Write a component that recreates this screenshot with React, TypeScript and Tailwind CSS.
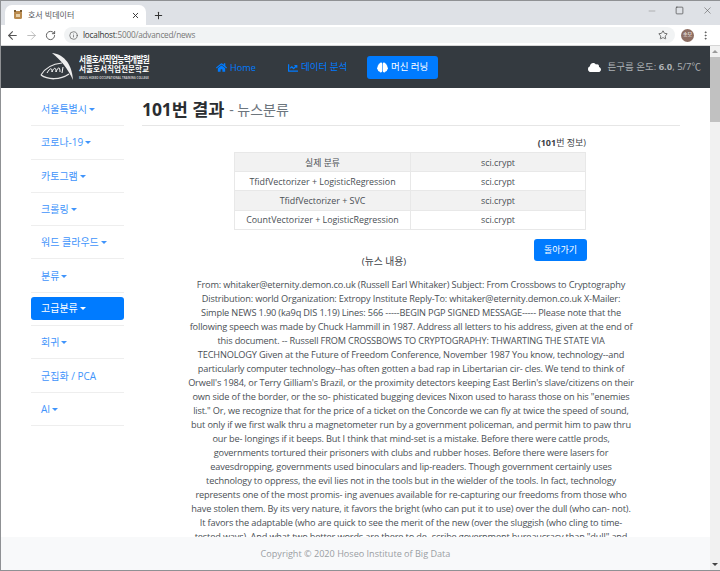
import React from "react";
import { FaHome, FaChartLine, FaBrain, FaCloud } from "react-icons/fa";
import { ArrowLeft, ArrowRight, RotateCw, Info, Star, X, Plus, Minus, Square, MoreVertical } from "lucide-react";

const sideItems = [
  { label: "서울특별시", caret: true },
  { label: "코로나-19", caret: true },
  { label: "카토그램", caret: true },
  { label: "크롤링", caret: true },
  { label: "워드 클라우드", caret: true },
  { label: "분류", caret: true },
  { label: "고급분류", caret: true, active: true },
  { label: "회귀", caret: true },
  { label: "군집화 / PCA", caret: false },
  { label: "AI", caret: true },
];

const rows = [
  ["실제 분류", "sci.crypt"],
  ["TfidfVectorizer + LogisticRegression", "sci.crypt"],
  ["TfidfVectorizer + SVC", "sci.crypt"],
  ["CountVectorizer + LogisticRegression", "sci.crypt"],
];

const lines = [
  "From: whitaker@eternity.demon.co.uk (Russell Earl Whitaker) Subject: From Crossbows to Cryptography",
  "Distribution: world Organization: Extropy Institute Reply-To: whitaker@eternity.demon.co.uk X-Mailer:",
  "Simple NEWS 1.90 (ka9q DIS 1.19) Lines: 566 -----BEGIN PGP SIGNED MESSAGE----- Please note that the",
  "following speech was made by Chuck Hammill in 1987. Address all letters to his address, given at the end of",
  "this document. -- Russell FROM CROSSBOWS TO CRYPTOGRAPHY: THWARTING THE STATE VIA",
  "TECHNOLOGY Given at the Future of Freedom Conference, November 1987 You know, technology--and",
  "particularly computer technology--has often gotten a bad rap in Libertarian cir- cles. We tend to think of",
  "Orwell's 1984, or Terry Gilliam's Brazil, or the proximity detectors keeping East Berlin's slave/citizens on their",
  "own side of the border, or the so- phisticated bugging devices Nixon used to harass those on his \"enemies",
  "list.\" Or, we recognize that for the price of a ticket on the Concorde we can fly at twice the speed of sound,",
  "but only if we first walk thru a magnetometer run by a government policeman, and permit him to paw thru",
  "our be- longings if it beeps. But I think that mind-set is a mistake. Before there were cattle prods,",
  "governments tortured their prisoners with clubs and rubber hoses. Before there were lasers for",
  "eavesdropping, governments used binoculars and lip-readers. Though government certainly uses",
  "technology to oppress, the evil lies not in the tools but in the wielder of the tools. In fact, technology",
  "represents one of the most promis- ing avenues available for re-capturing our freedoms from those who",
  "have stolen them. By its very nature, it favors the bright (who can put it to use) over the dull (who can- not).",
  "It favors the adaptable (who are quick to see the merit of the new (over the sluggish (who cling to time-",
  "tested ways). And what two better words are there to de- scribe government bureaucracy than \"dull\" and",
];

function Caret() {
  return <span className="inline-block ml-[2px] align-[2px] w-0 h-0 border-x-[3.5px] border-x-transparent border-t-[3.5px] border-t-current" />;
}

function Logo() {
  return (
    <div className="flex items-center gap-[4px] ml-[39px] w-[150px] shrink-0">
      <svg width="35" height="28" viewBox="0 0 35 28" fill="none" className="shrink-0">
        <path d="M1 22 C5 15 12 11 22 10" stroke="#e8e8e8" strokeWidth="1.2" />
        <path d="M12 0 C22 1 32 9 33 27 C28 16 21 7 12 0 Z" fill="#eeeeee" />
        <path d="M1 22 C8 27 20 27 29 21" stroke="#e8e8e8" strokeWidth="1.5" />
        <path d="M7 20 C10 15 12 14 12 19 C14 14 16 14 16 19 C18 14 20 13 20 19 M23 14 L22 20" stroke="#ffffff" strokeWidth="1" />
      </svg>
      <div className="flex flex-col text-white font-bold whitespace-nowrap">
        <span className="text-[7.6px] leading-[11px] tracking-[-0.6px] scale-y-[1.25]">서울호서직업능력개발원</span>
        <span className="text-[7.6px] leading-[9px] tracking-[0.02px]">서울호서직업전문학교</span>
        <span className="text-[2.8px] leading-[6px] text-[#cfcfcf] mt-[1px]">SEOUL HOSEO OCCUPATIONAL TRAINING COLLEGE</span>
      </div>
    </div>
  );
}

export default function App() {
  return (
    <div className="relative w-[720px] h-[571px] overflow-hidden flex flex-col bg-white border-t border-l border-[#8f9194] text-[#3d4247] font-['Open_Sans','Noto_Sans_CJK_KR',sans-serif]">
      {/* tab strip */}
      <div className="h-[24px] shrink-0 bg-[#dee1e6] flex items-end pl-[4px]">
        <div className="w-[141px] h-[20px] bg-white rounded-t-[7px] flex items-center pl-[8px] pr-[2px] text-[8px] text-[#55585c]">
          <svg width="10" height="10" viewBox="0 0 10 10" className="mr-[5px] shrink-0">
            <rect x="1" y="1" width="8" height="8" rx="1.5" fill="#b98a4e" />
            <rect x="1" y="0" width="2" height="2" fill="#7a5a30" />
            <rect x="7" y="0" width="2" height="2" fill="#7a5a30" />
            <rect x="3" y="4" width="4" height="3" fill="#e6cfa8" />
          </svg>
          <span>호서 빅데이터</span>
          <X size={9} strokeWidth={2.5} className="ml-auto mr-[4px] text-[#333]" />
        </div>
        <Plus size={11} strokeWidth={2.2} className="ml-[7px] mb-[4px] text-[#333]" />
        <div className="ml-auto flex items-center gap-[18px] pr-[7px] mb-[9px] text-[#555]">
          <Minus size={10} strokeWidth={1.3} className="text-[#888]" />
          <Square size={9} strokeWidth={1.6} className="text-[#333]" />
          <X size={11} strokeWidth={1.2} />
        </div>
      </div>
      {/* toolbar */}
      <div className="h-[21px] shrink-0 bg-white flex items-center pl-[5px] pr-[7px] border-b border-[#d6d6d6]">
        <ArrowLeft size={13} strokeWidth={2} className="text-[#555]" />
        <ArrowRight size={13} strokeWidth={1.6} className="ml-[6px] text-[#b5b5b5]" />
        <RotateCw size={11} strokeWidth={2} className="ml-[7px] text-[#555]" />
        <div className="ml-[8px] h-[16px] w-[611px] rounded-full bg-[#f1f3f4] flex items-center pl-[5px] pr-[7px] text-[8.2px] tracking-[-0.2px]">
          <Info size={9} strokeWidth={1.8} className="text-[#555] mr-[5px]" />
          <span className="text-[#333]">localhost</span>
          <span className="text-[#777]">:5000/advanced/news</span>
          <Star size={10} strokeWidth={2} className="ml-auto text-[#555]" />
        </div>
        <span className="ml-[6px] w-[13px] h-[13px] rounded-full bg-[#8d6e63] text-white text-[5px] flex items-center justify-center shrink-0">송모</span>
        <MoreVertical size={11} strokeWidth={2} className="ml-[6px] text-[#555]" />
      </div>

      <div className="flex-1 flex min-h-0">
        <div className="flex-1 min-w-0 relative overflow-hidden">
          {/* navbar */}
          <div className="h-[42px] bg-[#343a40] flex items-center">
            <Logo />
            <div className="ml-[26px] flex items-center gap-[3px] text-[#007bff] text-[9.2px] pt-[1px]">
              <FaHome size={11} />
              <span>Home</span>
            </div>
            <div className="ml-[32px] flex items-center gap-[3px] text-[#007bff] text-[9.5px] pt-[1px]">
              <FaChartLine size={10} />
              <span>데이터 분석</span>
            </div>
            <div className="ml-[20px] w-[71px] h-[23px] mt-[1px] rounded-[3px] bg-[#007bff] text-white text-[9.5px] flex items-center justify-center gap-[3px]">
              <FaBrain size={11} />
              <span>머신 러닝</span>
            </div>
            <div className="ml-auto pr-[9px] flex items-center gap-[7px] text-[#aeb2b6] text-[9.5px]">
              <FaCloud size={13} className="text-white" />
              <span>튼구름 온도: <b className="font-bold">6.0</b>, 5/7℃</span>
            </div>
          </div>

          <div className="flex items-start">
            {/* sidebar */}
            <div className="w-[93px] ml-[30px] shrink-0 pt-[5px] text-[10px] text-[#3f94fb]">
              {sideItems.map((it) => (
                <div key={it.label} className="h-[33.3px] border-b border-[#eeeeee] flex items-center">
                  <div className={it.active ? "w-full h-[23px] rounded-[3px] bg-[#007bff] text-white flex items-center pl-[10px]" : "pl-[10px] pt-[1px]"}>
                    {it.label}
                    {it.caret && <Caret />}
                  </div>
                </div>
              ))}
            </div>

            {/* main */}
            <div className="w-[538px] ml-[18px] shrink-0">
              <div className="h-[38px] border-b border-[#e6e6e6] flex items-center pt-[5px] text-[#2a2d31]">
                <h1 className="text-[17.5px] font-bold tracking-[-0.1px]">101번 결과</h1>
                <span className="ml-[5px] text-[14px] mt-[1px] text-[#6c757d]">- 뉴스분류</span>
              </div>
              <div className="w-[352px] ml-[92px] mt-[10px]">
                <div className="text-right text-[9px] leading-[14px]">
                  <b className="font-bold">(101</b>번 정보)
                </div>
                <table className="w-full mt-[2px] border-collapse text-[8.9px] text-[#4a4f55]">
                  <tbody>
                    {rows.map((r, i) => (
                      <tr key={r[0]} className={i % 2 === 0 ? "bg-[#f2f2f2]" : "bg-white"}>
                        <td className="w-[176px] h-[19.2px] p-0 pt-[1px] text-center border border-[#e8e8e8]">{r[0]}</td>
                        <td className="p-0 pt-[1px] text-center border border-[#e8e8e8]">{r[1]}</td>
                      </tr>
                    ))}
                  </tbody>
                </table>
                <div className="mt-[9px] flow-root">
                  <div className="float-right -mr-[1px] w-[53px] h-[22px] rounded-[3px] bg-[#007bff] text-white text-[9px] flex items-center justify-center">돌아가기</div>
                  <div className="text-center text-[9.8px] leading-[14px] pt-[16px]">(뉴스 내용)</div>
                </div>
              </div>
              <div className="mt-[9px] text-center text-[9.2px] tracking-[-0.15px] leading-[14px] whitespace-nowrap text-[#4a4f55]">
                {lines.map((l) => (
                  <div key={l}>{l}</div>
                ))}
              </div>
            </div>
          </div>

          {/* sticky footer over content */}
          <div className="absolute left-0 right-0 bottom-0 h-[33px] bg-[#f8f9fa] flex items-center justify-center text-[9.1px] text-[#9a9ea3]">
            Copyright © 2020 Hoseo Institute of Big Data
          </div>
        </div>

        {/* scrollbar */}
        <div className="w-[10px] shrink-0 bg-[#f1f1f1] flex flex-col items-center">
          <span className="mt-[4px] w-0 h-0 border-x-[3px] border-x-transparent border-b-[3px] border-b-[#9a9a9a]" />
          <span className="mt-[4px] w-full h-[65px] bg-[#c1c1c1]" />
          <span className="mt-auto mb-[4px] w-0 h-0 border-x-[3px] border-x-transparent border-t-[3px] border-t-[#444]" />
        </div>
      </div>
      <div className="h-[1px] shrink-0 bg-[#8f9194]" />
    </div>
  );
}
